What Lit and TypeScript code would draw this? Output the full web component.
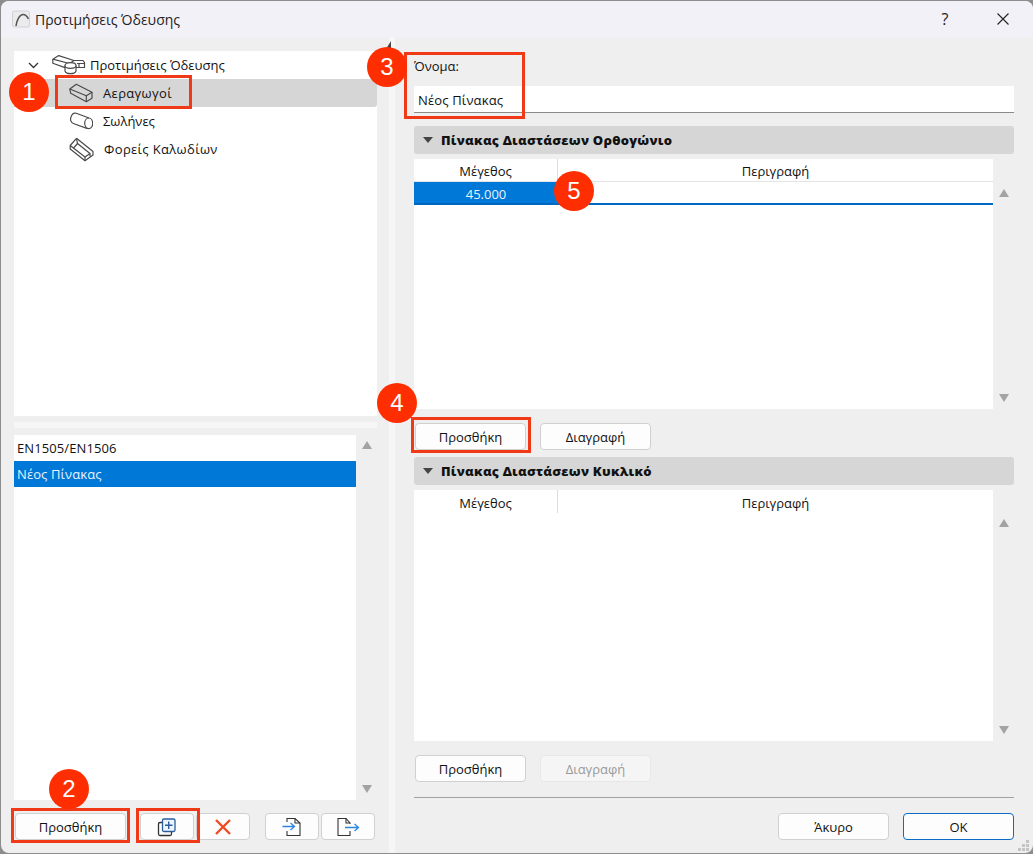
import { LitElement, html, css, svg } from "lit";
import { customElement } from "lit/decorators.js";

const badges = [
  { n: "1", x: 29, y: 92 },
  { n: "2", x: 69, y: 789 },
  { n: "3", x: 387, y: 67 },
  { n: "4", x: 397, y: 403 },
  { n: "5", x: 574, y: 191 },
];
const frames = [
  { x: 55, y: 75, w: 137, h: 34 },
  { x: 11, y: 808, w: 119, h: 35 },
  { x: 136, y: 808, w: 64, h: 35 },
  { x: 404, y: 52, w: 121, h: 67 },
  { x: 411, y: 417, w: 120, h: 36 },
];

const line = (d: string) => svg`<path d=${d} fill="none" stroke="#4a4a4a" stroke-width="1.2" stroke-linejoin="round"/>`;

const ductIcon = html`<svg class="ti" width="24" height="20" viewBox="0 0 24 20">
  ${line("M.8 6 L7.3 1.3 L23 9.3 L17.3 12.8 Z")}${line("M.8 6 L1.7 10.3 L17.3 18.7 L23 15.3 V9.3")}${line("M17.3 12.8 V18.7")}
</svg>`;
const pipeIcon = html`<svg class="ti" width="24" height="18" viewBox="0 0 24 18">
  ${line("M7.3 1.3 L20 6 M18.5 16.6 L5 11.8 C1.5 10.5 1 7.5 2 5 C3 2 5 .6 7.3 1.3")}<ellipse cx="19.7" cy="11.3" rx="4" ry="5.3" fill="none" stroke="#4a4a4a" stroke-width="1.2"/>
</svg>`;
const trayIcon = html`<svg class="ti" width="25" height="25" viewBox="0 0 25 25">
  ${line("M7.5 1.3 L24 14.5 V18 L16 23.7 L1.2 12 V8.5 L7.5 1.3")}${line("M7.5 1.3 L8.5 6.5 L21 16.5 V19.5")}${line("M1.2 8.5 L16 20 V23.7")}${line("M8.5 6.5 L4.5 11.2")}${line("M16 20 L21 16.5")}
</svg>`;
const rootIcon = html`<svg class="root-ico" width="34" height="20" viewBox="0 0 34 20">
  ${line("M.8 4.2 L6.7 .6 L22 5.5 L17.5 8.5 Z")}${line("M.8 4.2 V8.2 L13 12.6")}${line("M17.5 8.5 V10")}
  ${line("M13 10.5 V16 C14 19.6 23 19.6 24 16 V10.5")}<ellipse cx="18.5" cy="10.5" rx="5.5" ry="2.8" fill="#fff" stroke="#4a4a4a" stroke-width="1.2"/>
  ${line("M22 5.5 H31 L32.5 7.5 V12.5 H24")}${line("M25 8.5 H32.5 M27 8.5 V12.5")}
</svg>`;
const arrow = (up: boolean) =>
  html`<svg class="arrow" width="10" height="8" viewBox="0 0 10 8"><path d=${up ? "M0 8 L5 0 L10 8Z" : "M0 0 L10 0 L5 8Z"} fill="#a3a3a3"/></svg>`;

@customElement("app-root")
export class AppRoot extends LitElement {
  static styles = css`
    :host { display: block; width: 1033px; height: 854px; position: relative; overflow: hidden; background: #8d8d8d;
      font-family: "Open Sans", "Noto Sans", sans-serif; font-size: 13px; color: #111; }
    .window { box-sizing: border-box; width: 1032px; height: 852px; margin: 1px 0 0 1px; border-radius: 8px; background: #efefef; overflow: hidden; display: flex; flex-direction: column; }
    .title { height: 36px; flex: none; background: #f3f1f8; display: flex; align-items: center; padding: 0 0 0 10px; font-size: 14px; color: #222; }
    .app-ico { margin-right: 4px; }
    .title .name { flex: 1; }
    .title .help { width: 20px; text-align: center; margin-right: 42px; font-size: 16px; }
    .title .x { margin-right: 24px; display: flex; }
    .body { flex: 1; display: flex; min-height: 0; }
    .left { width: 388px; flex: none; box-sizing: border-box; padding: 14px 12px 0 13px; display: flex; flex-direction: column; }
    .tree { height: 365px; flex: none; background: #fff; }
    .tree-row { height: 28px; display: flex; align-items: center; padding-left: 55px; font-size: 13px; }
    .tree-row.root { padding-left: 14px; }
    .tree-row.sel { background: #d6d6d6; border-radius: 0 3px 3px 0; }
    .tree-row .ti { margin-right: 10px; flex: none; }
    .tree-row .wide { letter-spacing: .35px; }
    .chev { margin-right: 13px; }
    .root-ico { margin-right: 4px; }
    .h-split { height: 6px; flex: none; margin-top: 6px; background: #f6f6f6; }
    .list-wrap { display: flex; margin-top: 7px; height: 365px; flex: none; }
    .list { width: 342px; background: #fff; flex: none; }
    .list-row { height: 26px; line-height: 26px; padding-left: 3px; letter-spacing: .1px; }
    .list-row.sel { background: #0078d7; color: #e8f2fb; }
    .scroll { flex: 1; display: flex; flex-direction: column; justify-content: space-between; align-items: center; padding: 6px 0 7px; }
    .tools { display: flex; margin-top: 13px; }
    .v-split { width: 6px; flex: none; background: #f6f6f6; position: relative; }
    .tick { position: absolute; left: -3px; top: 4px; }
    .right { flex: 1; box-sizing: border-box; padding: 0 19px 0 19px; display: flex; flex-direction: column; min-width: 0; }
    .label { height: 49px; flex: none; line-height: 16px; padding: 21px 0 0 0; box-sizing: border-box; }
    .input { height: 27px; flex: none; box-sizing: border-box; background: #fff; border-bottom: 1px solid #8a8a8a; line-height: 28px; padding-left: 4px; letter-spacing: .15px; }
    .sect { height: 28px; flex: none; background: #d6d6d6; border-radius: 3px; display: flex; align-items: center; font-weight: 800; padding-left: 9px; gap: 8px; letter-spacing: .25px; }
    .sect.first { margin-top: 13px; }
    .sect.second { margin-top: 7px; }
    .table-wrap { display: flex; margin-top: 5px; height: 250px; flex: none; }
    .table-wrap.second { height: 251px; }
    .table { width: 579px; flex: none; background: #fff; }
    .thead { height: 23px; display: flex; box-sizing: border-box; }
    .thead.line { border-bottom: 1px solid #e4e4e4; }
    .thead div { text-align: center; line-height: 25px; }
    .second .thead div { line-height: 27px; }
    .c1 { width: 144px; flex: none; border-right: 1px solid #dcdcdc; box-sizing: border-box; }
    .c2 { flex: 1; }
    .trow { display: flex; height: 23px; box-sizing: border-box; border-bottom: 2px solid #0067c0; }
    .trow .c1 { background: #0078d7; color: #e8f2fb; text-align: center; line-height: 24px; border-right: 0; height: 21px; }
    .side { flex: 1; display: flex; flex-direction: column; align-items: center; justify-content: space-between; padding: 30px 0 7px; }
    .second .side { padding-top: 29px; }
    .btns { display: flex; flex: none; margin-left: 1px; gap: 14px; margin-top: 14px; }
    .btn { box-sizing: border-box; height: 27px; width: 111px; flex: none; background: #fdfdfd; border: 1px solid #d0d0d0; border-radius: 4px; display: flex; align-items: center; justify-content: center; font-family: inherit; font-size: 13px; color: #111; padding: 0; }
    .btn.dis { background: #f5f5f5; border-color: #e8e8e8; color: #9a9a9a; }
    .btn.ok { border-color: #0a6cc4; }
    .btn.ico { width: 54px; margin-left: 2px; }
    .btn.after-text { margin-left: 14px; }
    .btn.after-gap { margin-left: 15px; }
    .btn.first { margin-left: 1px; }
    .rule { height: 1px; flex: none; background: #a0a0a0; margin-top: 15px; }
    .foot { display: flex; justify-content: flex-end; gap: 14px; margin-top: 15px; }
    .frame { position: absolute; box-sizing: border-box; border: 3px solid #f03a17; }
    .badge { position: absolute; width: 40px; height: 40px; margin: -20px 0 0 -20px; border-radius: 50%; background: #ff2e00; color: #fff; font-family: "Liberation Sans", Arial, sans-serif; font-size: 24px; line-height: 40px; text-align: center; }
    .grip { position: absolute; left: 1018px; top: 840px; }
  `;

  render() {
    return html`
      <div class="window">
        <div class="title">
          <svg class="app-ico" width="20" height="20" viewBox="0 0 20 20">
            <rect x="1.5" y="2" width="17" height="16" rx="2" fill="#ebebeb" stroke="#d2d2d2"/>
            <path d="M5 17 C6 10 9 5.5 12 5.5 C14.5 5.5 16.5 8 17.5 10" fill="none" stroke="#555" stroke-width="1.6"/>
          </svg>
          <span class="name">Προτιμήσεις Όδευσης</span>
          <span class="help">?</span>
          <span class="x"><svg width="12" height="12" viewBox="0 0 12 12"><path d="M.5 .5 L11.5 11.5 M11.5 .5 L.5 11.5" stroke="#222" stroke-width="1.1"/></svg></span>
        </div>
        <div class="body">
          <div class="left">
            <div class="tree">
              <div class="tree-row root">
                <svg class="chev" width="11" height="7" viewBox="0 0 11 7"><path d="M1 1 L5.5 5.5 L10 1" fill="none" stroke="#333" stroke-width="1.3"/></svg>
                ${rootIcon}<span>Προτιμήσεις Όδευσης</span>
              </div>
              <div class="tree-row sel">${ductIcon}<span class="wide">Αεραγωγοί</span></div>
              <div class="tree-row">${pipeIcon}<span>Σωλήνες</span></div>
              <div class="tree-row">${trayIcon}<span class="wide">Φορείς Καλωδίων</span></div>
            </div>
            <div class="h-split"></div>
            <div class="list-wrap">
              <div class="list">
                <div class="list-row">EN1505/EN1506</div>
                <div class="list-row sel">Νέος Πίνακας</div>
              </div>
              <div class="scroll">${arrow(true)}${arrow(false)}</div>
            </div>
            <div class="tools">
              <button class="btn first">Προσθήκη</button>
              <button class="btn ico after-text">
                <svg width="20" height="20" viewBox="0 0 20 20">
                  <path d="M5 5.5 H3 A1.5 1.5 0 0 0 1.5 7 V17 A1.5 1.5 0 0 0 3 18.5 H13 A1.5 1.5 0 0 0 14.5 17 V15" fill="none" stroke="#333" stroke-width="1.3"/>
                  <rect x="5.5" y="2" width="12.5" height="12.5" rx="1.5" fill="#eef4fc" stroke="#2b5c9e" stroke-width="1.3"/>
                  <path d="M11.7 4.5 V12 M8 8.2 H15.5" stroke="#2b5c9e" stroke-width="1.4"/>
                </svg>
              </button>
              <button class="btn ico">
                <svg width="18" height="18" viewBox="0 0 18 18"><path d="M2 2 L16 16 M16 2 L2 16" stroke="#f04a24" stroke-width="2.4"/></svg>
              </button>
              <button class="btn ico after-gap">
                <svg width="20" height="20" viewBox="0 0 20 20">
                  <path d="M5 5 V1.5 H13 L18 6 V18.5 H5 V14" fill="none" stroke="#333" stroke-width="1.1"/><path d="M13 1.5 V6 H18" fill="none" stroke="#333" stroke-width="1.1"/>
                  <path d="M.5 9.5 H12 M8.5 6 L12.5 9.5 L8.5 13" fill="none" stroke="#2f86e0" stroke-width="1.3"/>
                </svg>
              </button>
              <button class="btn ico">
                <svg width="24" height="20" viewBox="0 0 24 20">
                  <path d="M14 14 V18.5 H2 V1.5 H10 L14 6 V7" fill="none" stroke="#333" stroke-width="1.1"/><path d="M10 1.5 V6 H14" fill="none" stroke="#333" stroke-width="1.1"/>
                  <path d="M9 10.5 H22 M18.5 7 L22.5 10.5 L18.5 14" fill="none" stroke="#2f86e0" stroke-width="1.3"/>
                </svg>
              </button>
            </div>
          </div>
          <div class="v-split">
            <svg class="tick" width="5" height="8" viewBox="0 0 5 8"><path d="M5 0 V8 H0Z" fill="#444"/></svg>
          </div>
          <div class="right">
            <div class="label">Όνομα:</div>
            <div class="input">Νέος Πίνακας</div>
            <div class="sect first">
              <svg width="10" height="6" viewBox="0 0 10 6"><path d="M0 0 H10 L5 6Z" fill="#444"/></svg>
              <span>Πίνακας Διαστάσεων Ορθογώνιο</span>
            </div>
            <div class="table-wrap">
              <div class="table">
                <div class="thead line"><div class="c1">Μέγεθος</div><div class="c2">Περιγραφή</div></div>
                <div class="trow"><div class="c1">45.000</div><div class="c2"></div></div>
              </div>
              <div class="side">${arrow(true)}${arrow(false)}</div>
            </div>
            <div class="btns"><button class="btn">Προσθήκη</button><button class="btn">Διαγραφή</button></div>
            <div class="sect second">
              <svg width="10" height="6" viewBox="0 0 10 6"><path d="M0 0 H10 L5 6Z" fill="#444"/></svg>
              <span>Πίνακας Διαστάσεων Κυκλικό</span>
            </div>
            <div class="table-wrap second">
              <div class="table">
                <div class="thead"><div class="c1">Μέγεθος</div><div class="c2">Περιγραφή</div></div>
              </div>
              <div class="side">${arrow(true)}${arrow(false)}</div>
            </div>
            <div class="btns"><button class="btn">Προσθήκη</button><button class="btn dis">Διαγραφή</button></div>
            <div class="rule"></div>
            <div class="foot"><button class="btn">Άκυρο</button><button class="btn ok">OK</button></div>
          </div>
        </div>
      </div>
      ${frames.map((f) => html`<div class="frame" style="left:${f.x}px;top:${f.y}px;width:${f.w}px;height:${f.h}px"></div>`)}
      ${badges.map((b) => html`<div class="badge" style="left:${b.x}px;top:${b.y}px">${b.n}</div>`)}
      <svg class="grip" width="12" height="12" viewBox="0 0 12 12" fill="#c4c4c4">
        <rect x="8" y="0" width="3" height="3"/><rect x="4" y="4" width="3" height="3"/><rect x="8" y="4" width="3" height="3"/>
        <rect x="0" y="8" width="3" height="3"/><rect x="4" y="8" width="3" height="3"/><rect x="8" y="8" width="3" height="3"/>
      </svg>
    `;
  }
}
